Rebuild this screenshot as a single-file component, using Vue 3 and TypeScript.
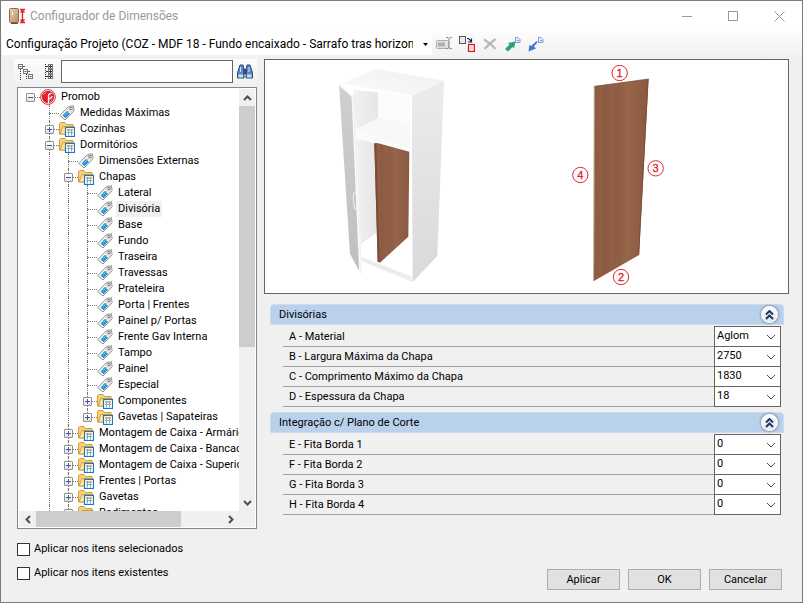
<script setup lang="ts">
import { computed, reactive, ref } from 'vue'

interface TreeNode {
  label: string
  icon?: 'root' | 'tag' | 'folder'
  open?: boolean
  children?: TreeNode[]
}

interface Row {
  node: TreeNode
  level: number
  guides: boolean[]
  last: boolean
}

interface Field {
  id: string
  label: string
  value: string
}

interface Section {
  title: string
  open: boolean
  fields: Field[]
}

const tags = (...labels: string[]): TreeNode[] => labels.map((label) => ({ label, icon: 'tag' }))
const folder = (label: string, children?: TreeNode[]): TreeNode => ({
  label,
  icon: 'folder',
  open: !!children,
  children: children ?? [],
})

const root = reactive<TreeNode>({
  label: 'Promob',
  icon: 'root',
  open: true,
  children: [
    ...tags('Medidas Máximas'),
    folder('Cozinhas'),
    folder('Dormitórios', [
      ...tags('Dimensões Externas'),
      folder('Chapas', [
        ...tags(
          'Lateral', 'Divisória', 'Base', 'Fundo', 'Traseira', 'Travessas', 'Prateleira',
          'Porta | Frentes', 'Painel p/ Portas', 'Frente Gav Interna', 'Tampo', 'Painel', 'Especial',
        ),
        folder('Componentes'),
        folder('Gavetas | Sapateiras'),
      ]),
      folder('Montagem de Caixa - Armário'),
      folder('Montagem de Caixa - Bancada'),
      folder('Montagem de Caixa - Superior'),
      folder('Frentes | Portas'),
      folder('Gavetas'),
      folder('Rodimentos'),
    ]),
  ],
})

function flatten(node: TreeNode, level: number, guides: boolean[], last: boolean): Row[] {
  const own: Row = { node, level, guides, last }
  if (!node.open || !node.children) return [own]
  const kids = node.children
  return [
    own,
    ...kids.flatMap((kid, i) => flatten(kid, level + 1, [...guides, level > 0], i === kids.length - 1)),
  ]
}

const rows = computed(() => flatten(root, 0, [], true))
const selected = ref('Divisória')
const search = ref('')
const applySelected = ref(false)
const applyExisting = ref(false)

const sections = reactive<Section[]>([
  {
    title: 'Divisórias',
    open: true,
    fields: [
      { id: 'a', label: 'A - Material', value: 'Aglom' },
      { id: 'b', label: 'B - Largura Máxima da Chapa', value: '2750' },
      { id: 'c', label: 'C - Comprimento Máximo da Chapa', value: '1830' },
      { id: 'd', label: 'D - Espessura da Chapa', value: '18' },
    ],
  },
  {
    title: 'Integração c/ Plano de Corte',
    open: true,
    fields: [
      { id: 'e', label: 'E - Fita Borda 1', value: '0' },
      { id: 'f', label: 'F - Fita Borda 2', value: '0' },
      { id: 'g', label: 'G - Fita Borda 3', value: '0' },
      { id: 'h', label: 'H - Fita Borda 4', value: '0' },
    ],
  },
])

const marks = [
  { n: 1, x: 179, y: 54 },
  { n: 2, x: 183, y: 666 },
  { n: 3, x: 287, y: 340 },
  { n: 4, x: 61, y: 360 },
]
</script>

<template>
  <div class="window">
    <header class="titlebar">
      <svg class="app-icon" width="17" height="16" viewBox="0 0 17 16">
        <defs>
          <linearGradient id="door" x1="0" y1="0" x2="1" y2="1">
            <stop offset="0" stop-color="#ecd7b2" /><stop offset="1" stop-color="#b78c58" />
          </linearGradient>
        </defs>
        <rect x=".5" y=".5" width="9" height="14" rx="1" fill="url(#door)" stroke="#8a6a48" />
        <path d="M2 15.5h7" stroke="#5d4c3c" />
        <path d="M3.5 4v3" stroke="#fff" />
        <path d="M11 1.500h5M11 14.500h5M13.500 2v12M11.500 4.500l2-2 2 2M11.500 11.500l2 2 2-2" fill="none" stroke="#e1192d" stroke-width="1.300" />
      </svg>
      <h1>Configurador de Dimensões</h1>
      <div class="caption-buttons">
        <button type="button" aria-label="Minimizar"><svg width="11" height="11"><path d="M0 5.500h10" /></svg></button>
        <button type="button" aria-label="Maximizar"><svg width="11" height="11"><rect x=".5" y=".5" width="9" height="9" /></svg></button>
        <button type="button" aria-label="Fechar"><svg width="11" height="11"><path d="M.5.5l10 10M10.500.5l-10 10" /></svg></button>
      </div>
    </header>

    <nav class="toolbar">
      <div class="config">
        <select aria-label="Configuração">
          <option>Configuração Projeto (COZ - MDF 18 - Fundo encaixado - Sarrafo tras horizontal)</option>
        </select>
        <svg class="caret" width="5" height="3"><path d="M0 0h5L2.500 3z" /></svg>
      </div>
      <button type="button" aria-label="Renomear" class="tool">
        <svg width="16" height="16" viewBox="0 0 16 16">
          <rect x=".5" y="4.500" width="12" height="8" rx="1" fill="#e2e2e2" stroke="#adadad" />
          <path d="M2 6.500h7v4H2z" fill="#b0b0b0" />
          <path d="M10 1.500h2l1 1 1-1h2M13 2.500v10M10 12.500h2l1-1 1 1h2" fill="none" stroke="#8d8d8d" />
        </svg>
      </button>
      <button type="button" aria-label="Copiar" class="tool">
        <svg width="16" height="16" viewBox="0 0 16 16">
          <rect x=".5" y=".5" width="6" height="7" fill="#ebe6ec" stroke="#5b565c" />
          <path d="M8 2.500h1.500l3 3M12.500 2.500v3.500h-3.500" fill="none" stroke="#18186b" stroke-width="1.200" />
          <rect x="9.500" y="8.500" width="6" height="7" fill="#f0e9e9" stroke="#e80e12" stroke-width="1.200" />
        </svg>
      </button>
      <button type="button" aria-label="Excluir" class="tool">
        <svg width="16" height="16" viewBox="0 0 16 16">
          <path d="M2 3.500Q8 7 13.500 13M13.500 3Q8 7 2.500 13" fill="none" stroke="#b9b9b9" stroke-width="2.200" />
        </svg>
      </button>
      <button type="button" aria-label="Exportar" class="tool">
        <svg width="16" height="16" viewBox="0 0 16 16">
          <path d="M0 13l4.500-4.500L3 7l7.500-1.500L9 12.500 7.500 11 3 15.500z" fill="#2aa276" />
          <path d="M10.500 1.500h2.500l2 2v3h-4.500z" fill="#e2efff" stroke="#7d9ccb" /><path d="M12 4.500h2" stroke="#7d9ccb" />
        </svg>
      </button>
      <button type="button" aria-label="Importar" class="tool">
        <svg width="16" height="16" viewBox="0 0 16 16">
          <path d="M10 5.500L6 10.500 8 12.500.5 15.500 1.500 8.500l1.500 1.500L8 5.500z" fill="#3b78cf" />
          <path d="M10.500 1.500h2.500l2 2v3h-4.500z" fill="#e2efff" stroke="#7d9ccb" /><path d="M12 4.500h2" stroke="#7d9ccb" />
        </svg>
      </button>
    </nav>

    <main class="body">
      <aside class="side">
        <div class="searchbar">
          <button type="button" aria-label="Recolher tudo" class="tool">
            <svg width="16" height="16" viewBox="0 0 16 16" fill="none" stroke="#777">
              <path d="M2.500 5v11M8.500 10v6M5 6.500h1M11 11.500h1" stroke-dasharray="1 1" stroke="#333" />
              <rect x=".5" y=".5" width="4" height="4" fill="#fff" /><path d="M1.500 2.500h2M5 2.500h2" stroke="#456" />
              <rect x="5.500" y="5.500" width="4" height="4" fill="#fff" /><path d="M6.500 7.500h2M10 7.500h2" stroke="#456" />
              <rect x="10.500" y="10.500" width="4" height="4" fill="#fff" /><path d="M11.500 12.500h2" stroke="#456" />
            </svg>
          </button>
          <button type="button" aria-label="Expandir tudo" class="tool">
            <svg width="16" height="16" viewBox="0 0 16 16" fill="none" stroke="#777">
              <path d="M4.500 0v16" stroke-dasharray="1 1" stroke="#333" stroke-width="1" />
              <rect x="7.500" y=".5" width="4" height="4" fill="#fff" /><rect x="7.500" y="5.500" width="4" height="4" fill="#fff" /><rect x="7.500" y="10.500" width="4" height="4" fill="#fff" />
              <path d="M5 2.500h2M5 7.500h2M5 12.500h2M8 2.500h3M9.500 1v3M8 7.500h3M9.500 6v3M8 12.500h3M9.500 11v3" stroke="#333" />
            </svg>
          </button>
          <input v-model="search" type="text" aria-label="Procurar" />
          <button type="button" aria-label="Localizar" class="find">
            <svg width="16" height="16" viewBox="0 0 16 16">
              <path d="M3 1h3l1 4v9H.5V9zM13 1h-3L9 5v9h6.500V9z" fill="#5d8bc0" stroke="#28487f" />
              <path d="M6.500 5h3v5h-3z" fill="#28487f" />
              <path d="M1.500 10.500h4.500v3h-4.500zM10 10.500h4.500v3H10z" fill="#c7dff5" />
              <path d="M3.500 3v5M12 3v5" stroke="#cfe4f8" />
            </svg>
          </button>
        </div>

        <div class="treebox">
          <ul class="tree">
            <li v-for="row in rows" :key="row.node.label" class="row">
              <span v-for="(line, i) in row.guides" :key="i" class="cell" :class="{ vline: line }"></span>
              <span class="cell branch" :class="{ vline: row.level > 0, ends: row.last && row.level > 1 }">
                <button
                  v-if="row.node.children"
                  type="button"
                  class="toggle"
                  :class="{ plus: !row.node.open }"
                  :aria-label="row.node.label"
                  @click="row.node.open = !row.node.open"
                ></button>
              </span>
              <svg v-if="row.node.icon === 'root'" class="icon" width="16" height="16" viewBox="0 0 16 16">
                <circle cx="8" cy="8" r="7.400" fill="#fff" stroke="#d8323b" />
                <circle cx="8" cy="8" r="6.200" fill="#dc1f2b" />
                <path d="M8.500 14V9.500q3.500 0 3.500-2.500M8.500 9.500V6.500q0-2 3-2" fill="none" stroke="#fff" stroke-width="1.300" />
                <path d="M3.500 6q1-2 3-2.500M12 10.500q-.5 1.500-2 2" fill="none" stroke="#f4a6aa" stroke-width=".8" />
              </svg>
              <svg v-else-if="row.node.icon === 'tag'" class="icon" width="16" height="16" viewBox="0 0 16 16">
                <path d="M.8 10.500L9.500 1.500 14.500.8l.5 5L6 15z" fill="#fbfbfb" stroke="#8d8d8d" stroke-linejoin="round" />
                <path d="M10 2l4-.6.400 4-2.400 2.300L8 4z" fill="#dcdcdc" />
                <rect x="11" y="2.500" width="2" height="2" fill="#fff" stroke="#777" stroke-width=".8" />
                <path d="M3.500 10.500l4.500-4.700 3 3-4.500 4.500z" fill="#2a91d2" />
                <path d="M5.500 10.500l4-4" stroke="#7cc0ec" />
              </svg>
              <svg v-else class="icon" width="16" height="16" viewBox="0 0 16 16">
                <path d="M.5 13V2.500l1-1H6l1.500 2h6.500V13z" fill="#f8d174" stroke="#d79b3b" />
                <path d="M1 13l3-7.500h11V13z" fill="#ffe7a4" stroke="#d79b3b" />
                <rect x="6.500" y="6.500" width="9" height="9" fill="#fff" stroke="#1b7ab9" stroke-width="1.200" />
                <path d="M8 8h6v2H8z" fill="#f2bd57" />
                <path d="M8 11.500h6M9.500 8v6.500M12.500 8v6.500" stroke="#75aedb" />
              </svg>
              <span class="label" :class="{ on: row.node.label === selected }" @click="selected = row.node.label">{{ row.node.label }}</span>
            </li>
          </ul>
          <div class="vbar">
            <button type="button" aria-label="Acima"><svg width="9" height="6"><path d="M1 5l3.500-3.500L8 5" /></svg></button>
            <div class="track"><div class="thumb"></div></div>
            <button type="button" aria-label="Abaixo"><svg width="9" height="6"><path d="M1 1l3.500 3.500L8 1" /></svg></button>
          </div>
          <div class="hbar">
            <button type="button" aria-label="Esquerda"><svg width="6" height="9"><path d="M5 1L1.500 4.500 5 8" /></svg></button>
            <div class="track"><div class="thumb"></div></div>
            <button type="button" aria-label="Direita"><svg width="6" height="9"><path d="M1 1l3.500 3.500L1 8" /></svg></button>
          </div>
        </div>
      </aside>

      <section class="content">
        <svg class="preview" viewBox="0 0 523 233" role="img" aria-label="Divisória">
          <defs>
            <linearGradient id="wood" x1="0" x2="1" y1="0" y2="0">
              <stop offset="0" stop-color="#8c5b42" /><stop offset=".14" stop-color="#925f45" />
              <stop offset=".2" stop-color="#8b5a42" /><stop offset=".34" stop-color="#936047" />
              <stop offset=".45" stop-color="#8e5d44" /><stop offset=".6" stop-color="#976548" />
              <stop offset=".75" stop-color="#916047" /><stop offset="1" stop-color="#8a5940" />
            </linearGradient>
            <linearGradient id="side" x1="0" x2="0" y1="0" y2="1">
              <stop offset="0" stop-color="#ececec" /><stop offset="1" stop-color="#d9d9d9" />
            </linearGradient>
            <linearGradient id="leaf" x1="0" x2="0" y1="0" y2="1">
              <stop offset="0" stop-color="#cfcfcf" /><stop offset="1" stop-color="#bfbfbf" />
            </linearGradient>
            <linearGradient id="wall" x1="0" x2="1" y1="0" y2="0">
              <stop offset="0" stop-color="#f1f1f1" /><stop offset="1" stop-color="#e6e6e6" />
            </linearGradient>
            <linearGradient id="lid" x1="0" x2="1" y1="1" y2="0">
              <stop offset="0" stop-color="#fcfcfc" /><stop offset="1" stop-color="#efefef" />
            </linearGradient>
          </defs>
          <g transform="translate(55 0) scale(.33333)">
            <path d="M100 90L175 97V178L108 207z" fill="url(#wall)" />
            <path d="M175 97L272 108V192L175 173z" fill="#fcfcfc" />
            <path d="M108 235L165 250L170 515L122 550z" fill="url(#wall)" />
            <path d="M108 207L175 173L272 190V275L108 235z" fill="#f8f8f8" />
            <path d="M108 207V235L272 275V267z" fill="#fafafa" />
            <path d="M163 250L172 249L268 275L265 530L180 608L173 606z" fill="url(#wood)" />
            <path d="M163 250L169 252L179 608L173 606z" fill="#7a4b35" />
            <path d="M122 550L170 515" stroke="#ddd" stroke-width="2" />
            <path d="M58 72L168 27L372 62L275 108z" fill="url(#lid)" />
            <path d="M58 72L275 108" stroke="#fff" stroke-width="4" />
            <path d="M275 108L372 62L352 588L278 666z" fill="url(#side)" />
            <path d="M271 108L276 108L273 648L268 646z" fill="#fff" />
            <path d="M125 589L272 646L278 666L125 604z" fill="#ececec" />
            <path d="M125 589L272 646" stroke="#fff" stroke-width="4" />
            <path d="M57 73L99 108L121 638L90 582z" fill="url(#leaf)" />
            <path d="M57 73L97 108L120 636" fill="none" stroke="#fafafa" stroke-width="5" />
            <path d="M100 104L124 640" stroke="#e9e9e9" stroke-width="2" />
            <path d="M106 396Q99 400 100 418T105 446L110 445" fill="none" stroke="#e8e8e8" stroke-width="4" />
          </g>
          <g transform="translate(295 5) scale(.33333)">
            <g transform="translate(0 -30)">
              <path d="M103 94L266 72L237 600L102 678z" fill="url(#wood)" />
              <path d="M103 94L101 678" stroke="#b59c88" stroke-width="3" />
              <path d="M264 73L236 600" stroke="#7d4d37" stroke-width="3" />
              <path d="M103 94L266 72" stroke="#774b38" stroke-width="2" />
              <g v-for="m in marks" :key="m.n">
                <circle :cx="m.x" :cy="m.y" r="23" fill="#fff" stroke="#e0242c" stroke-width="3" />
                <text :x="m.x" :y="m.y + 12" class="mark">{{ m.n }}</text>
              </g>
            </g>
          </g>
        </svg>

        <div class="props">
          <section v-for="s in sections" :key="s.title" class="group">
            <header class="group-head">
              <h2>{{ s.title }}</h2>
              <button type="button" class="round" :aria-label="s.title" @click="s.open = !s.open">
                <svg width="9" height="10"><path d="M1 4.500L4.500 1 8 4.500M1 9L4.500 5.500 8 9" /></svg>
              </button>
            </header>
            <div v-if="s.open" class="fields">
              <div v-for="f in s.fields" :key="f.id" class="field">
                <label :for="f.id">{{ f.label }}</label>
                <div class="combo">
                  <select :id="f.id" v-model="f.value"><option>{{ f.value }}</option></select>
                  <svg class="chev" width="10" height="6"><path d="M1 1l4 4 4-4" /></svg>
                </div>
              </div>
            </div>
          </section>
        </div>
      </section>
    </main>

    <footer class="footer">
      <div class="checks">
        <label><input v-model="applySelected" type="checkbox" />Aplicar nos itens selecionados</label>
        <label><input v-model="applyExisting" type="checkbox" />Aplicar nos itens existentes</label>
      </div>
      <div class="actions">
        <button type="button">Aplicar</button>
        <button type="button">OK</button>
        <button type="button">Cancelar</button>
      </div>
    </footer>
  </div>
</template>

<style>
body {
  margin: 0;
}
</style>

<style scoped>
* {
  box-sizing: border-box;
}
.window {
  display: flex;
  flex-direction: column;
  height: 100vh;
  border: 1px solid #7b7b7b;
  background: #f0f0f0;
  color: #000;
  font: 11px/16px Roboto, 'Liberation Sans', sans-serif;
  overflow: hidden;
}
button,
select,
input {
  margin: 0;
  font: inherit;
  color: inherit;
}
button {
  display: flex;
  align-items: center;
  justify-content: center;
  flex: none;
  padding: 0;
  border: 0;
  background: none;
}
select {
  appearance: none;
  width: 100%;
  padding: 0;
  border: 0;
  border-radius: 0;
  outline: 0;
  background: #fff;
}
h1,
h2,
ul {
  margin: 0;
  padding: 0;
  font-weight: 400;
}
svg {
  display: block;
  flex: none;
}
.titlebar {
  display: flex;
  align-items: center;
  flex: none;
  height: 30px;
  padding-left: 8px;
  background: #fff;
}
h1 {
  flex: 1;
  margin-left: 4px;
  color: #999;
  font-size: 12px;
  line-height: 16px;
}
.caption-buttons {
  display: flex;
}
.caption-buttons button {
  width: 46px;
  height: 30px;
}
.caption-buttons path,
.caption-buttons rect {
  fill: none;
  stroke: #999;
}
.toolbar {
  display: flex;
  align-items: center;
  flex: none;
  height: 28px;
  padding: 0 0 2px 1px;
  background: linear-gradient(#fdfdfd, #f0f0f0);
}
.config {
  display: flex;
  align-items: center;
  width: 430px;
  height: 22px;
  padding-left: 4px;
  background: #fff;
  font-size: 12px;
}
.config select {
  flex: 1;
  min-width: 0;
}
.caret {
  margin: 0 4px 0 10px;
}
.tool {
  width: 23px;
  height: 22px;
}
.body {
  display: flex;
  flex: 1;
  gap: 7px;
  min-height: 0;
  padding: 0 13px;
}
.side {
  display: flex;
  flex-direction: column;
  flex: none;
  width: 243px;
}
.searchbar {
  display: flex;
  align-items: center;
  height: 25px;
  margin-bottom: 3px;
  background: linear-gradient(#fcfcfc, #f2f2f2);
}
.searchbar input {
  flex: 1;
  min-width: 0;
  height: 23px;
  margin-left: 1px;
  padding: 0 4px;
  border: 1px solid #646464;
  outline: 0;
  background: #fff;
}
.find {
  width: 24px;
}
.treebox {
  display: grid;
  grid-template-columns: minmax(0, 1fr) 16px;
  grid-template-rows: minmax(0, 1fr) 16px;
  flex: 1;
  min-height: 0;
  margin-left: 3px;
  padding: 1px;
  border: 1px solid #828790;
  background: #fff;
}
.tree {
  overflow: hidden;
  padding-left: 2px;
  list-style: none;
}
.row {
  display: flex;
  height: 16px;
  white-space: nowrap;
}
.cell {
  position: relative;
  flex: none;
  width: 19px;
}
.vline::before {
  content: '';
  position: absolute;
  top: 0;
  bottom: 0;
  left: 9px;
  border-left: 1px dotted #777;
}
.ends::before {
  bottom: 8px;
}
.branch::after {
  content: '';
  position: absolute;
  top: 8px;
  left: 9px;
  right: 0;
  border-top: 1px dotted #777;
}
.toggle {
  position: absolute;
  z-index: 1;
  top: 4px;
  left: 5px;
  width: 9px;
  height: 9px;
  border: 1px solid #919191;
  border-radius: 1px;
  background: linear-gradient(#3d5ba0, #3d5ba0) center / 5px 1px no-repeat, linear-gradient(#fff, #e4e4e4);
}
.toggle.plus {
  background: linear-gradient(#3d5ba0, #3d5ba0) center / 5px 1px no-repeat,
    linear-gradient(#3d5ba0, #3d5ba0) center / 1px 5px no-repeat, linear-gradient(#fff, #e4e4e4);
}
.icon {
  margin-right: 3px;
}
.label {
  padding: 0 2px;
}
.label.on {
  background: #f0f0f0;
}
.vbar,
.hbar {
  display: flex;
  background: #f0f0f0;
}
.vbar {
  flex-direction: column;
}
.hbar {
  grid-column: 1 / -1;
  padding-right: 16px;
}
.vbar button,
.hbar button {
  width: 17px;
  height: 17px;
}
.vbar path,
.hbar path {
  fill: none;
  stroke: #505050;
  stroke-width: 2;
}
.track {
  flex: 1;
}
.thumb {
  background: #cdcdcd;
}
.vbar .thumb {
  height: 62%;
}
.hbar .thumb {
  width: 78%;
  height: 16px;
}
.content {
  flex: 1;
  min-width: 0;
}
.preview {
  width: 100%;
  border: 1px solid #646464;
  background: #fff;
}
.mark {
  fill: #e0242c;
  font: 33px 'Liberation Sans', sans-serif;
  text-anchor: middle;
  stroke: #e0242c;
  stroke-width: 1px;
}
.props {
  display: flex;
  flex-direction: column;
  gap: 5px;
  padding: 10px 5px 0 6px;
}
.group-head {
  display: flex;
  align-items: center;
  justify-content: space-between;
  height: 21px;
  margin-bottom: 1px;
  padding: 0 5px 0 8px;
  border: 1px solid #cbdcf0;
  border-radius: 4px 4px 0 0;
  background: #b9d1ea;
}
h2 {
  font-size: 11px;
  line-height: 16px;
}
.round {
  width: 17px;
  height: 17px;
  border: 1px solid #fff;
  border-radius: 50%;
  background: linear-gradient(#fff, #e6e6ee);
  box-shadow: 0 0 2px 1px #8b95a8;
}
.round path {
  fill: none;
  stroke: #1d3568;
  stroke-width: 2;
}
.fields {
  padding: 0 3px 0 13px;
}
.field {
  display: flex;
  height: 20px;
}
.field:first-child {
  height: 21px;
}
.field label {
  display: flex;
  align-items: center;
  flex: 1;
  padding: 1px 0 0 6px;
  border-bottom: 1px solid #a0a0a0;
}
.combo {
  display: flex;
  align-items: center;
  flex: none;
  width: 67px;
  padding: 0 4px 0 2px;
  border: solid #646464;
  border-width: 0 1px 1px;
  background: #fff;
}
.field:first-child .combo {
  border-top-width: 1px;
}
.combo select {
  flex: 1;
  min-width: 0;
  padding-bottom: 1px;
}
.chev path {
  fill: none;
  stroke: #505050;
  stroke-width: 1;
}
.footer {
  display: flex;
  align-items: flex-end;
  justify-content: space-between;
  flex: none;
  padding: 12px 20px 12px 16px;
}
.checks {
  display: flex;
  flex-direction: column;
  gap: 8px;
  padding-bottom: 9px;
}
.checks label {
  display: flex;
  align-items: center;
  gap: 4px;
}
.checks input {
  appearance: none;
  width: 13px;
  height: 13px;
  border: 1px solid #333;
  background: #fff;
}
.checks input:checked {
  box-shadow: inset 0 0 0 2px #fff;
  background: #333;
}
.actions {
  display: flex;
  gap: 8px;
}
.actions button {
  width: 73px;
  height: 21px;
  border: 1px solid #adadad;
  background: #e1e1e1;
}
</style>
